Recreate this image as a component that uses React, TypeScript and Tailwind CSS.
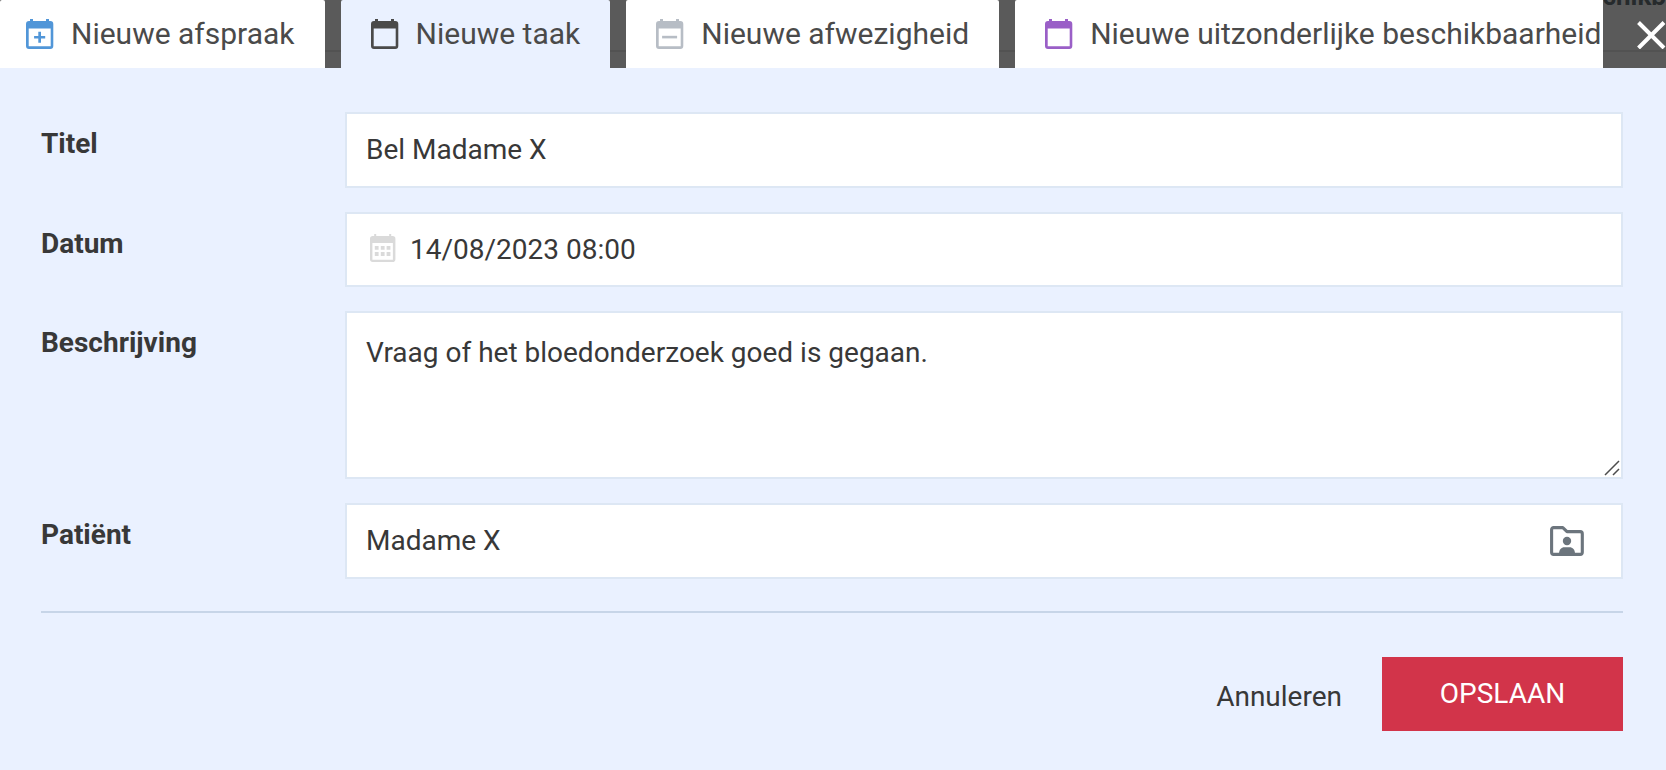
import { useState, type ReactNode } from "react";

function CalendarIcon({ className, children }: { className: string; children?: ReactNode }) {
  return (
    <svg viewBox="0 0 28 30" className={`h-[30px] w-7 shrink-0 ${className}`} fill="currentColor" aria-hidden="true">
      <path
        fillRule="evenodd"
        d="M4 0h3v2h13V0h3v2h1.3a3 3 0 0 1 3 3v22a3 3 0 0 1-3 3H3a3 3 0 0 1-3-3V5a3 3 0 0 1 3-3h1zM2.7 9.4v17.9h22V9.4z"
      />
      {children}
    </svg>
  );
}

function DateIcon() {
  return (
    <svg viewBox="0 0 26 28" className="mb-1 h-7 w-[26px] shrink-0 text-[#dadada]" fill="currentColor" aria-hidden="true">
      <path
        fillRule="evenodd"
        d="M4.2 0h2v2h13V0h2v2h1.4a2.8 2.8 0 0 1 2.8 2.8v20.4a2.8 2.8 0 0 1-2.8 2.8H2.8A2.8 2.8 0 0 1 0 25.2V4.8A2.8 2.8 0 0 1 2.8 2h1.4zM2.4 9v16.8h20.5V9z"
      />
      <path d="M4.8 12h3.8v3.8H4.8zM10.8 12h3.8v3.8h-3.8zM16.6 12h3.8v3.8h-3.8zM4.8 18.1h3.8v3.8H4.8zM10.8 18.1h3.8v3.8h-3.8zM16.6 18.1h3.8v3.8h-3.8z" />
    </svg>
  );
}

function PatientFolderIcon() {
  return (
    <svg viewBox="0 0 34 30" className="h-[30px] w-[34px]" aria-hidden="true">
      <path
        d="M3.6 1.6h9.2l4.2 4h13.2a2.1 2.1 0 0 1 2.1 2.1v18.6a2.1 2.1 0 0 1-2.1 2.1H3.7a2.1 2.1 0 0 1-2.1-2.1V3.6a2 2 0 0 1 2-2z"
        fill="none"
        stroke="currentColor"
        strokeWidth="3.1"
        strokeLinejoin="round"
      />
      <circle cx="17" cy="15" r="4.2" fill="currentColor" />
      <path d="M9 27.5c0-4 2.4-6.3 5.4-6.3h5.2c3 0 5.4 2.3 5.4 6.3z" fill="currentColor" />
    </svg>
  );
}

const tabs = [
  {
    label: "Nieuwe afspraak",
    icon: (
      <CalendarIcon className="text-[#5196d8]">
        <path d="M12.3 12.8h2.7v4.1h4.2v2.7H15v4.1h-2.7v-4.1H8.1v-2.7h4.2z" />
      </CalendarIcon>
    ),
  },
  { label: "Nieuwe taak", icon: <CalendarIcon className="text-[#4a4a4a]" /> },
  {
    label: "Nieuwe afwezigheid",
    icon: (
      <CalendarIcon className="text-[#b7bdc5]">
        <path d="M6.1 16.8h15v2.6h-15z" />
      </CalendarIcon>
    ),
  },
  { label: "Nieuwe uitzonderlijke beschikbaarheid", icon: <CalendarIcon className="text-[#9a5fc7]" /> },
];

const labelClass = "pt-2.5 text-[28px] leading-[44px] font-bold";
const fieldClass =
  "block w-full rounded-none border-2 border-[#dde7f4] bg-white px-[19px] text-[28px] leading-9 outline-none";

export default function App() {
  const [active, setActive] = useState(1);

  return (
    <div className="min-h-screen bg-[#eaf1ff] font-['Roboto',sans-serif] text-[#383838]">
      <header className="relative flex h-[68px] overflow-hidden bg-[#5a5a5a]">
        <div className="absolute inset-x-0 top-[50px] h-[2px] bg-[#525252]" />
        <span className="absolute -top-5 right-0 text-[26px] leading-8 font-bold text-[#262a2c]" aria-hidden="true">
          chikb
        </span>
        <div role="tablist" className="relative flex min-w-0 flex-1 gap-4 overflow-hidden">
          {tabs.map((tab, i) => (
            <button
              key={tab.label}
              type="button"
              role="tab"
              aria-selected={active === i}
              onClick={() => setActive(i)}
              className={`flex shrink-0 items-center gap-[17px] rounded-t-[2px] pr-[30px] text-[30px] leading-9 whitespace-nowrap text-[#4a4a4a] ${
                i === 0 ? "pl-[26px]" : "pl-[30px]"
              } ${active === i ? "bg-[#eaf1ff]" : "bg-white"}`}
            >
              {tab.icon}
              {tab.label}
            </button>
          ))}
        </div>
        <div className="relative flex w-[63px] shrink-0 items-center justify-end">
          <button type="button" aria-label="Sluiten" className="text-white">
            <svg viewBox="0 0 30 30" className="size-[30px]" fill="none" stroke="currentColor" strokeWidth="4" aria-hidden="true">
              <path d="M2.5 3.5l25.5 25.5M28 3.5L2.5 29" />
            </svg>
          </button>
        </div>
      </header>

      <form className="pt-11 pr-[43px] pb-10 pl-[41px]" onSubmit={(e) => e.preventDefault()}>
        <div className="grid grid-cols-[304px_1fr] gap-y-6">
          <label htmlFor="title" className={labelClass}>
            Titel
          </label>
          <input id="title" defaultValue="Bel Madame X" className={`h-19 pb-0.5 ${fieldClass}`} />

          <label htmlFor="date" className={labelClass}>
            Datum
          </label>
          <div className="flex h-[75px] items-center gap-3.5 border-2 border-[#dde7f4] bg-white pr-[19px] pl-[23px]">
            <DateIcon />
            <input
              id="date"
              defaultValue="14/08/2023 08:00"
              className="min-w-0 flex-1 bg-transparent text-[28px] leading-9 outline-none"
            />
          </div>

          <label htmlFor="description" className={labelClass}>
            Beschrijving
          </label>
          <div className="relative">
            <textarea
              id="description"
              defaultValue="Vraag of het bloedonderzoek goed is gegaan."
              className={`h-42 resize-y py-[22px] [&::-webkit-resizer]:bg-transparent ${fieldClass}`}
            />
            <svg
              viewBox="0 0 16 16"
              className="pointer-events-none absolute right-[3px] bottom-[3px] size-4"
              fill="none"
              stroke="#4d4d4d"
              strokeWidth="1.5"
              aria-hidden="true"
            >
              <path d="M1 15L15 1M9 15l6-6" />
            </svg>
          </div>

          <label htmlFor="patient" className={labelClass}>
            Patiënt
          </label>
          <div className="flex h-19 items-center border-2 border-[#dde7f4] bg-white pr-[37px] pl-[19px]">
            <input
              id="patient"
              defaultValue="Madame X"
              className="min-w-0 flex-1 bg-transparent text-[28px] leading-9 outline-none"
            />
            <button type="button" aria-label="Patiënt kiezen" className="text-[#6c757d]">
              <PatientFolderIcon />
            </button>
          </div>
        </div>

        <hr className="mt-8 border-t-2 border-[#c7d5e8]" />

        <div className="mt-11 flex justify-end gap-10">
          <button type="button" className="pt-1.5 text-[28px] leading-9">
            Annuleren
          </button>
          <button type="submit" className="h-[74px] w-[241px] bg-[#d2344a] text-[28px] leading-9 text-white">
            OPSLAAN
          </button>
        </div>
      </form>
    </div>
  );
}
